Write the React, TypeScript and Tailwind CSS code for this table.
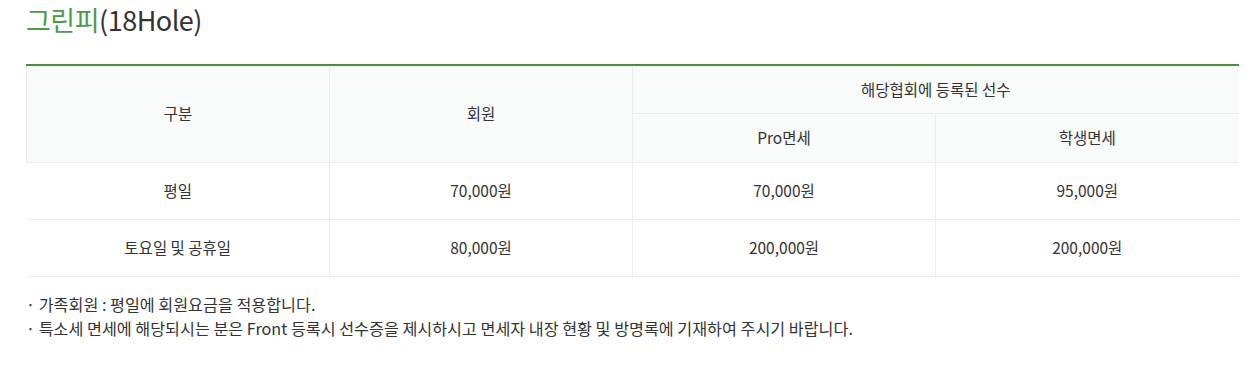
const font = { fontFamily: '"Noto Sans CJK KR", "Noto Sans", sans-serif' };

const rows = [
  { label: "평일", member: "70,000원", pro: "70,000원", student: "95,000원" },
  { label: "토요일 및 공휴일", member: "80,000원", pro: "200,000원", student: "200,000원" },
];

export default function App() {
  return (
    <div className="bg-white w-[1247px] h-[366px] pl-[26px] text-[#333]" style={font}>
      <h2 className="pt-[2px] text-[27px] leading-[36px] font-normal tracking-[-0.5px]">
        <span className="text-[#4d9a4d]">그린피</span>
        <span className="text-[#333]">(18Hole)</span>
      </h2>
      <table className="mt-[26px] w-[1212px] border-collapse table-fixed border-t-2 border-[#4a8f3c] text-[15.5px] text-[#333]">
        <colgroup>
          <col className="w-[303px]" />
          <col className="w-[303px]" />
          <col className="w-[303px]" />
          <col className="w-[303px]" />
        </colgroup>
        <thead className="bg-[#f9fafa]">
          <tr className="h-[48px]">
            <th rowSpan={2} className="font-normal border-b border-r border-l border-[#ececec] border-l-[#e8e8e8]">
              구분
            </th>
            <th rowSpan={2} className="font-normal border-b border-r border-[#ececec]">
              회원
            </th>
            <th colSpan={2} className="font-normal border-b border-[#ececec]">
              해당협회에 등록된 선수
            </th>
          </tr>
          <tr className="h-[49px]">
            <th className="font-normal border-b border-r border-[#ececec]">Pro면세</th>
            <th className="font-normal border-b border-[#ececec]">학생면세</th>
          </tr>
        </thead>
        <tbody>
          {rows.map((r) => (
            <tr key={r.label} className="h-[57px]">
              <td className="text-center border-b border-r border-[#ececec]">{r.label}</td>
              <td className="text-center border-b border-r border-[#ececec]">{r.member}</td>
              <td className="text-center border-b border-r border-[#ececec]">{r.pro}</td>
              <td className="text-center border-b border-[#ececec]">{r.student}</td>
            </tr>
          ))}
        </tbody>
      </table>
      <ul className="mt-[15px] text-[16.2px] leading-[24px] text-[#333]">
        <li>· 가족회원 : 평일에 회원요금을 적용합니다.</li>
        <li>· 특소세 면세에 해당되시는 분은 Front 등록시 선수증을 제시하시고 면세자 내장 현황 및 방명록에 기재하여 주시기 바랍니다.</li>
      </ul>
    </div>
  );
}
